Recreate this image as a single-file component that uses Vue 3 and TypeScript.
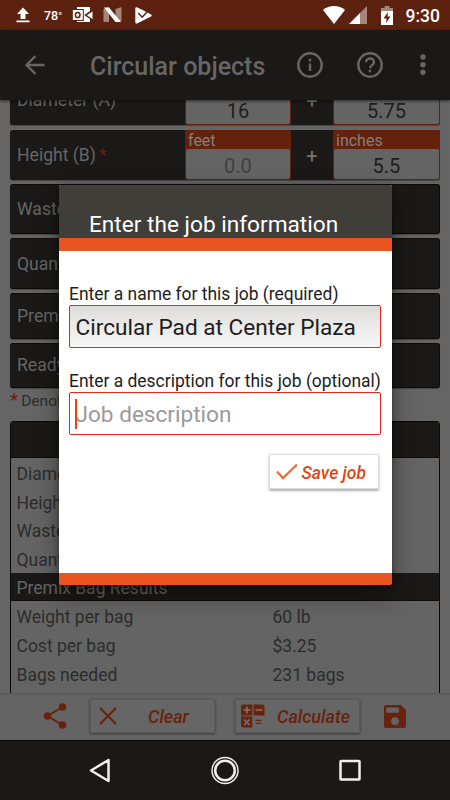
<script setup lang="ts">
interface Measure {
  label: string
  feet: string
  inches: string
  placeholder?: boolean
}

interface ResultRow {
  label: string
  value: string
}

const measures: Measure[] = [
  { label: 'Diameter (A)', feet: '16', inches: '5.75' },
  { label: 'Height (B)', feet: '0.0', inches: '5.5', placeholder: true },
]

const sections = [
  { label: 'Waste', size: 'tall' },
  { label: 'Quantity', size: 'taller' },
  { label: 'Premix', size: 'short' },
  { label: 'Ready', size: 'short' },
]

const inputs: string[] = ['Diameter', 'Height', 'Waste', 'Quantity']

const results: ResultRow[] = [
  { label: 'Weight per bag', value: '60 lb' },
  { label: 'Cost per bag', value: '$3.25' },
  { label: 'Bags needed', value: '231 bags' },
]
</script>

<template>
  <div class="screen">
    <header class="status">
      <svg class="s-up" viewBox="0 0 14 16"><path d="M7 0.5 13 7H9.5v5h-5V7H1zM0.5 13.5h13v1.7h-13z" /></svg>
      <span class="temp">78<i>°</i></span>
      <svg class="s-mail" viewBox="0 0 21 18">
        <path d="M5 1h13v15H5z" />
        <path d="M20.500 5v8.500L14 9z" />
        <path class="cut" d="M20.500 4.500 13.500 9l7 5" />
        <rect class="edge" x="0.3" y="3.500" width="11" height="11" />
        <ellipse class="cut" cx="5.7" cy="9" rx="2.300" ry="2.600" />
      </svg>
      <svg class="s-n" viewBox="0 0 19 16">
        <path class="faint" d="M0.5 2 6 0v15l-5.500 0zM12.500 2 18.500 0v14l-6 1z" />
        <path d="M1 0.500h5l12 14.500h-5.500z" />
      </svg>
      <svg class="s-play" viewBox="0 0 17 17">
        <path d="M0.300 1.200c0-1 .8-1.300 1.600-.9L8 3.200l4 2L16 7.500c1 .6 1 1.500 0 2.100L2.500 16.200c-1.300.6-2.200 0-2.200-1z" />
        <path class="cut" d="m3.200 6 4 4.200 6.800-7.500" />
      </svg>
      <span class="grow"></span>
      <svg class="s-wifi" viewBox="0 0 22 18"><path d="M0 4C6-1.200 16-1.200 22 4L11 18z" /></svg>
      <svg class="s-cell" viewBox="0 0 18 18"><path class="faint" d="M18 0v18H11V7z" /><path d="M11 7v11H0z" /></svg>
      <svg class="s-bat" viewBox="0 0 12 19">
        <path class="faint" d="M3.500 0h5v2H12v4H0V2h3.500z" /><path d="M0 5h12v14H0z" />
        <path class="bolt" d="M7 6 2.500 12.500h3L5 17l4.500-6.500h-3z" />
      </svg>
      <span class="clock">9:30</span>
    </header>

    <div class="toolbar">
      <svg class="back" viewBox="0 0 20 20"><path d="M19.500 10H2M10.500 1 1.500 10l9 9" /></svg>
      <h1>Circular objects</h1>
      <svg class="round" viewBox="0 0 26 26"><circle cx="13" cy="13" r="11.700" /><path d="M13 11.500v7.500M13 6.800v2.600" /></svg>
      <svg class="round help" viewBox="0 0 26 26">
        <circle cx="13" cy="13" r="11.700" />
        <path d="M9 10.300c0-5 8-5 8 0 0 3-4 3-4 6M13 17.800v2.500" />
      </svg>
      <svg class="more" viewBox="0 0 6 22"><circle cx="3" cy="3" r="2.700" /><circle cx="3" cy="10.700" r="2.700" /><circle cx="3" cy="18.300" r="2.700" /></svg>
    </div>

    <main class="content">
      <div class="rows">
        <div v-for="m in measures" :key="m.label" class="row measure">
          <span class="name">{{ m.label }}<b>*</b></span>
          <div class="field feet"><small>feet</small><div class="val" :class="{ ghost: m.placeholder }">{{ m.feet }}</div></div>
          <span class="plus">+</span>
          <div class="field inches"><small>inches</small><div class="val">{{ m.inches }}</div></div>
        </div>
        <div v-for="s in sections" :key="s.label" class="row" :class="s.size">
          <span class="name">{{ s.label }}</span>
        </div>
      </div>
      <p class="note"><b>*</b>Denotes</p>
      <section class="table">
        <div class="head"></div>
        <div v-for="i in inputs" :key="i" class="line">{{ i }}</div>
        <div class="band">Premix Bag Results</div>
        <div v-for="r in results" :key="r.label" class="line"><span>{{ r.label }}</span><span>{{ r.value }}</span></div>
      </section>
    </main>

    <footer class="actions">
      <svg class="share" viewBox="0 0 24 26">
        <path d="M19.500 4 4.500 13l15 9" /><circle cx="19.500" cy="4" r="3.800" /><circle cx="4.500" cy="13" r="3.800" /><circle cx="19.500" cy="22" r="3.800" />
      </svg>
      <button class="act clear">
        <svg class="cross" viewBox="0 0 18 18"><path d="m1 1 16 16M17 1 1 17" /></svg>
        <span>Clear</span>
      </button>
      <button class="act calc">
        <svg class="grid" viewBox="0 0 24 24">
          <path d="M2 0.500h9.300v11H0v-9a2 2 0 0 1 2-2zM12.500 0.500h9a2 2 0 0 1 2 2v9h-11zM0 12.500h11.300v11H2a2 2 0 0 1-2-2z" />
          <path class="sign" d="M2.500 6h7M6 2.500v7M14.500 6h7M3 15.500l5.500 5.500M8.500 15.500 3 21" />
          <path class="eq" d="M14.500 16.300h6M14.500 19.300h6" />
        </svg>
        <span>Calculate</span>
      </button>
      <svg class="disk" viewBox="0 0 22 23">
        <path fill-rule="evenodd" d="M2 0h15l5 5v16a2 2 0 0 1-2 2H2a2 2 0 0 1-2-2V2a2 2 0 0 1 2-2zM2.300 2.500v5.200h12.500V2.500zM11 12.200a3.900 3.900 0 1 0 0 7.800 3.900 3.900 0 0 0 0-7.800z" />
      </svg>
    </footer>

    <nav class="nav">
      <svg viewBox="0 0 30 30"><path d="M23.500 4v21L6 14.500z" /></svg>
      <svg viewBox="0 0 30 30"><circle class="ring" cx="15" cy="14.500" r="13" /><circle cx="15" cy="14.500" r="9.800" /></svg>
      <svg viewBox="0 0 30 30"><rect x="5.500" y="5" width="19" height="18.500" rx="0.500" /></svg>
    </nav>

    <section class="dialog" role="dialog">
      <h2>Enter the job information</h2>
      <div class="body">
        <label class="l1">Enter a name for this job (required)</label>
        <div class="box filled">Circular Pad at Center Plaza</div>
        <label class="l2">Enter a description for this job (optional)</label>
        <div class="box empty"><span class="caret"></span>Job description</div>
        <button class="save">
          <svg viewBox="0 0 22 17"><path d="m1 8.500 6 6.500L21 1.500" /></svg>
          <span>Save job</span>
        </button>
      </div>
    </section>
  </div>
</template>

<style>
body {
  background: #656565;
}
</style>

<style scoped>
* {
  box-sizing: border-box;
}
svg {
  display: block;
  flex: none;
  overflow: visible;
}
.screen {
  position: relative;
  display: flex;
  flex-direction: column;
  width: 450px;
  height: 800px;
  overflow: hidden;
  background: #656565;
  font-family: Roboto, "Liberation Sans", sans-serif;
}
.status {
  display: flex;
  align-items: center;
  flex: none;
  height: 30px;
  padding: 0 10px 0 15.500px;
  background: #5d220f;
  color: #fff;
  fill: #fff;
}
.s-up { width: 14px; height: 16px; }
.temp { width: 28px; margin-left: 14.500px; font-size: 12.500px; font-weight: 500; }
.temp i { font-style: normal; font-size: 10px; }
.s-mail { width: 21px; height: 18px; }
.edge { stroke: #5d220f; stroke-width: 1; }
.cut { fill: none; stroke: #5d220f; stroke-width: 1.500; }
.faint { opacity: .45; }
.s-n { width: 19px; height: 16px; margin-left: 10px; }
.s-play { width: 17px; height: 17px; margin-left: 13px; }
.grow { flex: 1; }
.s-wifi { width: 22px; height: 18px; }
.s-cell { width: 18px; height: 18px; margin-left: 4px; }
.s-bat { width: 12px; height: 19px; margin-left: 14px; }
.bolt { fill: #5d220f; }
.clock { margin-left: 12.500px; font-size: 17.500px; font-weight: 500; line-height: 30px; padding-top: 2px; }

.toolbar {
  z-index: 1;
  display: flex;
  align-items: center;
  flex: none;
  height: 70px;
  padding: 0 24.500px 0 25px;
  background: #1a1917;
  box-shadow: 0 1px 3px rgba(0, 0, 0, .6);
  fill: #666;
}
.back { width: 20px; height: 20px; fill: none; stroke: #666; stroke-width: 2.400; }
.toolbar h1 { width: 207px; margin: 4px 0 0 45px; color: #666; font-size: 25px; font-weight: 500; line-height: 30px; white-space: nowrap; }
.round { width: 26px; height: 26px; fill: none; stroke: #666; stroke-width: 2.400; }
.help { margin-left: 34px; }
.more { width: 6px; height: 22px; margin-left: 36.500px; }

.content {
  flex: 1;
  min-height: 0;
  overflow: hidden;
  padding: 0 10px;
}
.rows { display: flex; flex-direction: column; gap: 4px; margin-top: -25px; }
.row {
  display: flex;
  flex: none;
  align-items: center;
  height: 50px;
  padding-left: 7px;
  border: 1px solid #0d0c0b;
  border-left-width: 0;
  border-radius: 3px;
  background: #1a1917;
  color: #656565;
  font-size: 17.600px;
  box-shadow: 0 1px 1px rgba(0, 0, 0, .3);
}
.measure { align-items: stretch; border: 0; margin-bottom: 1px; }
.measure + .row.tall { margin-top: -1px; }
.measure .name { width: 168px; line-height: 51px; }
.name { white-space: nowrap; }
.name b, .note b { margin-left: 3px; color: #6f1a18; font-size: 18px; font-weight: 400; line-height: 20px; }
.row.taller { height: 51px; }
.row.short { height: 45.500px; }
.field {
  display: flex;
  flex-direction: column;
  width: 106px;
  padding: 0 1px 1px;
  border-radius: 2px;
  background: #64210d;
}
.inches { width: 107px; }
.field small { height: 19px; padding-left: 2px; color: #858078; font-size: 16px; line-height: 21px; }
.val { height: 30px; border-radius: 2px; background: #646464; color: #1d1d1b; font-size: 20px; line-height: 34px; text-align: center; }
.val.ghost { color: #404040; }
.plus { width: 42px; color: #777; font-size: 20px; line-height: 53px; text-align: center; }
.note { height: 33px; margin: 0; color: #2d2d2d; font-size: 15.500px; line-height: 26px; white-space: nowrap; }
.note b { margin: 0 3px 0 0; font-size: 19px; }
.table { height: 280px; border: 1px solid #080808; border-radius: 3px 3px 0 0; background: #646464; color: #2c2c2c; font-size: 17.500px; }
.head { height: 36px; border-bottom: 1px solid #0d0c0b; border-radius: 2px 2px 0 0; background: #1a1917; }
.line, .band { display: flex; height: 28.700px; padding: 1px 0 0 5.500px; line-height: 30px; white-space: nowrap; }
.line span:first-child { width: 256px; }
.band { background: #1a1917; color: #656565; border-bottom: 1px solid #0d0c0b; line-height: 29px; }

.actions {
  z-index: 1;
  display: flex;
  align-items: center;
  flex: none;
  height: 47.500px;
  padding: 0 43.500px 2px 43px;
  border-top: 2px solid #5a5a59;
  background: #646464;
  fill: #68230e;
}
.share { width: 24px; height: 26px; stroke: #68230e; stroke-width: 2; }
.share path { fill: none; }
.share circle { stroke: none; }
.act {
  display: flex;
  align-items: center;
  height: 34px;
  padding: 0;
  border: 1px solid #5a5a5a;
  border-radius: 1px;
  background: #666;
  box-shadow: 0 1px 3px rgba(0, 0, 0, .45);
  color: #68230e;
  font: italic 500 18px/34px Roboto, "Liberation Sans", sans-serif;
}
.clear { width: 125px; margin-left: 23px; padding-left: 8px; }
.clear span { margin: 2px 0 0 31px; }
.calc { width: 125px; margin-left: 20px; padding-left: 5px; }
.calc span { margin: 2px 0 0 12px; }
.cross { width: 18px; height: 18px; stroke: #68230e; stroke-width: 2.200; }
.grid { width: 24px; height: 24px; }
.sign { fill: none; stroke: #777; stroke-width: 1.500; }
.eq { fill: none; stroke: #68230e; stroke-width: 1.200; }
.disk { width: 22px; height: 23px; margin-left: 23.500px; }

.nav {
  display: flex;
  justify-content: space-between;
  align-items: center;
  flex: none;
  height: 60px;
  padding: 0 85px;
  border-top: 1px solid #080808;
  background: #1a1917;
  fill: none;
  stroke: #f0f0f0;
  stroke-width: 2.500;
  stroke-linejoin: round;
}
.nav svg { width: 30px; height: 30px; }
.nav .ring { stroke-width: 1.500; }

.dialog {
  position: absolute;
  z-index: 2;
  top: 185px;
  left: 58.500px;
  width: 333px;
  height: 399.500px;
  border-bottom: 12px solid #e95420;
  border-radius: 2px;
  background: #fff;
  box-shadow: 0 10px 24px rgba(0, 0, 0, .42), 0 1px 5px rgba(0, 0, 0, .35);
}
.dialog h2 {
  height: 65.500px;
  margin: 0;
  padding: 13px 0 0 30.500px;
  border-bottom: 13px solid #e95420;
  border-radius: 2px 2px 0 0;
  background: #403e39;
  color: #fff;
  font-size: 22.650px;
  font-weight: 400;
  line-height: 53px;
  white-space: nowrap;
}
.body { display: flex; flex-direction: column; padding: 33px 10.500px 0; }
.body label { height: 21px; color: #1d1d1b; font-size: 17.450px; line-height: 20px; white-space: nowrap; }
.box {
  position: relative;
  height: 43px;
  padding-left: 5.500px;
  border: 1px solid #e5261a;
  border-radius: 2px;
  color: #1d1d1b;
  font-size: 22.600px;
  line-height: 43px;
  white-space: nowrap;
}
.filled { background: linear-gradient(#dedddb, #f7f7f7); }
.body .l2 { margin-top: 23px; }
.empty { color: #9a9a9a; }
.caret { position: absolute; top: 6px; left: 5px; width: 2px; height: 30px; background: #e8430f; }
.save {
  display: flex;
  align-items: center;
  align-self: flex-end;
  width: 110px;
  height: 35px;
  margin: 19.500px 2px 0 0;
  padding: 0 0 0 6px;
  border: 1px solid #ddd;
  border-radius: 1px;
  background: #fff;
  box-shadow: 0 1.500px 2.500px rgba(0, 0, 0, .32);
  color: #e6430f;
  font: italic 500 17.500px/35px Roboto, "Liberation Sans", sans-serif;
  white-space: nowrap;
}
.save svg { width: 22px; height: 17px; fill: none; stroke: #ee6c42; stroke-width: 2.400; }
.save span { margin: 3px 0 0 3.500px; }
</style>
